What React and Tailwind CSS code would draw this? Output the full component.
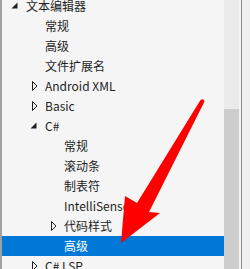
const items = [
  { label: '文本编辑器', level: 0, icon: 'open' },
  { label: '常规', level: 1 },
  { label: '高级', level: 1 },
  { label: '文件扩展名', level: 1 },
  { label: 'Android XML', level: 1, icon: 'closed' },
  { label: 'Basic', level: 1, icon: 'closed' },
  { label: 'C#', level: 1, icon: 'open' },
  { label: '常规', level: 2 },
  { label: '滚动条', level: 2 },
  { label: '制表符', level: 2 },
  { label: 'IntelliSense', level: 2 },
  { label: '代码样式', level: 2, icon: 'closed' },
  { label: '高级', level: 2, selected: true },
  { label: 'C# LSP', level: 1, icon: 'closed' },
]

const indent = ['pl-[5px]', 'pl-[24px]', 'pl-[43px]']

function Toggle({ icon, selected }) {
  const color = selected ? '#ffffff' : '#1e1e1e'
  if (icon === 'open') {
    return (
      <svg width="7" height="7" viewBox="0 0 7 7" className="ml-[4px] -mt-[1px]">
        <polygon points="6.5,0.5 6.5,6.5 0.5,6.5" fill={color} />
      </svg>
    )
  }
  if (icon === 'closed') {
    return (
      <svg width="6" height="10" viewBox="0 0 6 10" className="ml-[6px]">
        <polygon points="0.5,0.5 5,5 0.5,9.5" fill="none" stroke={color} strokeWidth="1" />
      </svg>
    )
  }
  return null
}

function Row({ item }) {
  return (
    <div
      className={`flex items-center h-[20px] whitespace-nowrap ${indent[item.level]} ${
        item.selected ? 'bg-[#0078d7] text-white' : 'text-[#1e1e1e]'
      }`}
    >
      <div className="w-[19px] flex items-center">
        <Toggle icon={item.icon} selected={item.selected} />
      </div>
      <span>{item.label}</span>
    </div>
  )
}

export default function App() {
  return (
    <div
      className="relative w-[250px] h-[269px] flex bg-[#f5f5f5] overflow-hidden text-[12px] leading-[20px]"
      style={{ fontFamily: '"Noto Sans CJK SC", "Noto Sans", sans-serif' }}
    >
      <div className="w-[2px] bg-[#a0a0a0]" />
      <div className="w-[222px] overflow-hidden">
        <div className="-mt-[4px]">
          {items.map((item, i) => (
            <Row key={i} item={item} />
          ))}
        </div>
      </div>
      <div className="w-[15px] flex flex-col bg-[#ebebeb]">
        <div className="h-[109px]" />
        <div className="flex-1 bg-[#cdcdcd]" />
      </div>
      <div className="w-[2px]" />
      <div className="w-[1px] bg-[#828790]" />
      <div className="w-[8px] bg-[#f0f0f0]" />

      {/* red arrow annotation */}
      <svg className="absolute left-0 top-0 pointer-events-none" width="250" height="269">
        <polygon
          points="200.5,100 204,102.5 149,212 160,213 121,243 125,196 137,203"
          fill="#ff0000"
        />
        <circle cx="202.3" cy="101.2" r="2" fill="#ff0000" />
      </svg>
    </div>
  )
}
